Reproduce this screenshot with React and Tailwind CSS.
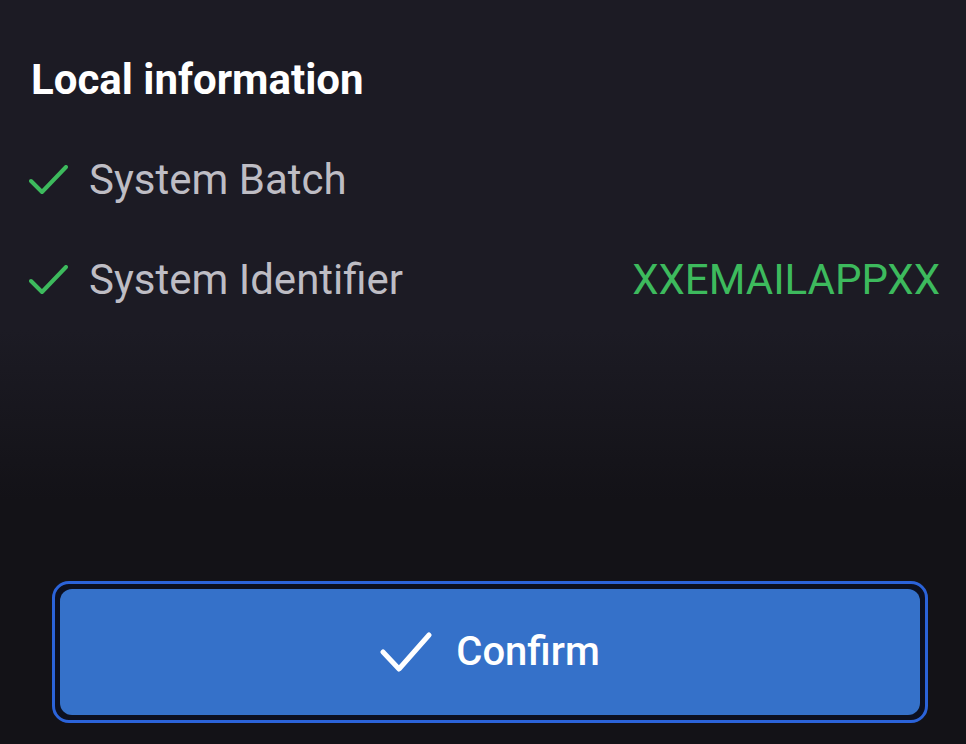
const ITEMS = [
  { label: "System Batch", value: "" },
  { label: "System Identifier", value: "XXEMAILAPPXX" },
];

const Tick = ({ className, w, h, points, stroke }) => (
  <svg
    width={w}
    height={h}
    viewBox={`0 0 ${w} ${h}`}
    fill="none"
    className={className}
  >
    <polyline
      points={points}
      stroke="currentColor"
      strokeWidth={stroke}
      strokeLinecap="round"
      strokeLinejoin="round"
    />
  </svg>
);

const InfoRow = ({ label, value }) => (
  <div className="flex items-center justify-between h-[100px]">
    <div className="flex items-center gap-[21px]">
      <Tick
        className="text-[#3dba5d] shrink-0"
        w={39}
        h={30}
        points="2,16 13,27 37,2"
        stroke={4}
      />
      <span className="text-[42px] text-[#bebdc4] leading-none">{label}</span>
    </div>
    {value && (
      <span className="text-[42px] text-[#3dba5d] leading-none">{value}</span>
    )}
  </div>
);

export default function App() {
  return (
    <div
      className="w-full h-[744px] flex flex-col bg-[linear-gradient(to_bottom,#1c1b24_0px,#1c1b24_330px,#131217_500px,#131217_100%)]"
      style={{ fontFamily: "Roboto, 'Noto Sans', sans-serif" }}
    >
      {/* Section */}
      <div className="pl-[29px] pr-[26px] pt-[59px]">
        <h2 className="pl-[2px] text-[42px] font-bold text-white leading-none mb-[29px]">
          Local information
        </h2>
        <div>
          {ITEMS.map((it) => (
            <InfoRow key={it.label} {...it} />
          ))}
        </div>
      </div>

      {/* Confirm button */}
      <div className="mt-auto mb-[21px] ml-[52px] mr-[38px]">
        <div className="rounded-[17px] border-[3px] border-[#2b63d9] bg-[#0c1020] p-[5px]">
          <button className="w-full h-[126px] rounded-[12px] bg-[#3571c9] flex items-center justify-center gap-[24px] text-white">
            <Tick
              className="shrink-0"
              w={52}
              h={40}
              points="3,20 19,37 49,3"
              stroke={5}
            />
            <span className="text-[40px] font-medium leading-none">Confirm</span>
          </button>
        </div>
      </div>
    </div>
  );
}
